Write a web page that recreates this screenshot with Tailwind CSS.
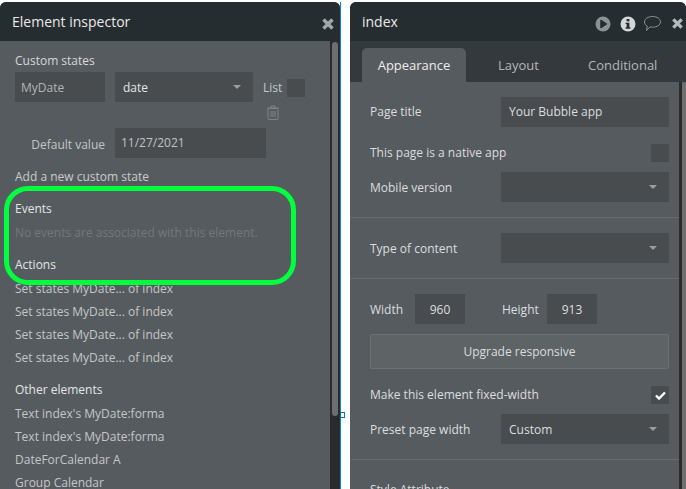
<!DOCTYPE html>
<html lang="en">
<head>
  <meta charset="UTF-8" />
  <title>Element inspector</title>
  <script src="https://cdn.jsdelivr.net/npm/@tailwindcss/browser@4"></script>
</head>
<body class="bg-white w-[686px] h-[489px] overflow-hidden relative font-['Open_Sans',sans-serif] text-[12px] leading-[16px] text-[#d6d8d9]">
  <div class="flex h-[489px] pt-[2px]">

    <!-- Element inspector -->
    <div class="w-[340px] shrink-0 flex flex-col bg-[#565b5f] rounded-t-[6px] overflow-hidden">
      <div class="h-[39px] shrink-0 bg-[#262d30] flex items-center justify-between pl-[12px] pr-[5px]">
        <span class="text-[14px] text-[#e8eaea]">Element inspector</span>
        <svg width="14" height="14" viewBox="0 0 14 14" class="mt-[4px]"><path d="M2.500 2.500l9 9M11.500 2.500l-9 9" stroke="#a0a6a9" stroke-width="3.600" /></svg>
      </div>
      <div class="flex flex-1 min-h-0">
        <div class="w-[330px] pl-[15px] flex flex-col [&>*]:shrink-0">
          <div class="mt-[12px] h-[16px]">Custom states</div>
          <div class="mt-[3px] flex">
            <div class="w-[90px] h-[30px] bg-[#484c4f] pl-[6px] pt-[8px] text-[#b2b5b7]">MyDate</div>
            <div class="ml-[10px] w-[138px] h-[30px] bg-[#484c4f] pl-[8px] flex items-center justify-between pr-[12px] text-[#e4e5e6]">
              <span class="mt-[2px]">date</span>
              <span class="w-0 h-0 border-x-[4px] border-t-[4px] border-x-transparent border-t-[#9a9ea0]"></span>
            </div>
            <div class="ml-[10px] h-[30px] flex items-center pt-[2px] text-[#c4c7c8]">List</div>
            <div class="ml-[5px] mt-[7px] w-[18px] h-[18px] bg-[#484c4f]"></div>
          </div>
          <svg width="14" height="15" viewBox="0 0 14 15" class="ml-[251px] mt-[3px]" fill="none" stroke="#7f8487"><path d="M1 3h12M5 2.500V1h4v1.500" /><rect x="2" y="3.500" width="10" height="11" rx="1" /><path d="M5 6v6M7 6v6M9 6v6" /></svg>
          <div class="mt-[8px] flex h-[30px]">
            <div class="w-[90px] text-right pt-[9px] text-[#c4c7c8]">Default value</div>
            <div class="ml-[10px] w-[151px] bg-[#484c4f] pl-[6px] pt-[7px] text-[#c0c3c4]">11/27/2021</div>
          </div>
          <div class="mt-[11px] h-[16px] text-[#c9cbcc]">Add a new custom state</div>
          <div class="mt-[16px] h-[16px] text-[#e4e5e6]">Events</div>
          <div class="mt-[8px] h-[16px] text-[#74787b]">No events are associated with this element.</div>
          <div class="mt-[16px] h-[16px] text-[#e4e5e6]">Actions</div>
          <div class="mt-[8px] h-[16px] text-[#c4c7c8]">Set states MyDate... of index</div>
          <div class="mt-[7px] h-[16px] text-[#c4c7c8]">Set states MyDate... of index</div>
          <div class="mt-[7px] h-[16px] text-[#c4c7c8]">Set states MyDate... of index</div>
          <div class="mt-[7px] h-[16px] text-[#c4c7c8]">Set states MyDate... of index</div>
          <div class="mt-[16px] h-[16px] text-[#e4e5e6]">Other elements</div>
          <div class="mt-[8px] h-[16px] text-[#c4c7c8]">Text index's MyDate:forma</div>
          <div class="mt-[7px] h-[16px] text-[#c4c7c8]">Text index's MyDate:forma</div>
          <div class="mt-[7px] h-[16px] text-[#c4c7c8]">DateForCalendar A</div>
          <div class="mt-[7px] h-[16px] text-[#c4c7c8]">Group Calendar</div>
        </div>
        <!-- scrollbar -->
        <div class="w-[10px] bg-[#2b2b2b] pl-[2px] pr-[2px] pt-[1px]">
          <div class="h-[374px] bg-[#6e6e6e] rounded-[3px]"></div>
        </div>
      </div>
    </div>

    <!-- blue guide line -->
    <div class="w-[1px] bg-[#0a84e8] shrink-0"></div>
    <div class="w-[9px] shrink-0"></div>

    <!-- index panel -->
    <div class="w-[336px] shrink-0 flex flex-col bg-[#565b5f] rounded-t-[6px] overflow-hidden">
      <div class="h-[39px] shrink-0 bg-[#262d30] flex items-center justify-between pl-[12px]">
        <span class="text-[14px] text-[#e8eaea]">index</span>
        <div class="flex items-center mt-[4px] mr-[2px]">
          <svg width="16" height="16" viewBox="0 0 16 16"><circle cx="8" cy="8" r="7.500" fill="#8b9294" /><path d="M5.800 4l6 4-6 4z" fill="#262d30" stroke="#262d30" stroke-linejoin="round" /></svg>
          <svg width="16" height="16" viewBox="0 0 16 16" class="ml-[9px]"><circle cx="8" cy="8" r="7.500" fill="#d4d7d8" /><rect x="6.600" y="3" width="2.800" height="2.400" fill="#262d30" /><path d="M5.600 6.700h3.800v4.600h1v1.400H5.600v-1.400h1V8.100h-1z" fill="#262d30" /></svg>
          <svg width="19" height="17" viewBox="0 0 19 17" class="ml-[7px]" fill="none" stroke="#8b9294"><path d="M9.500 1.500c4.600 0 8 2.400 8 5.400s-3.400 5.300-8 5.300c-.9 0-1.700-.1-2.500-.3L3.500 15.500l.8-4.300C2.500 10.200 1.500 8.700 1.500 6.900c0-3 3.400-5.400 8-5.400z" /></svg>
          <svg width="13" height="13" viewBox="0 0 14 14" class="ml-[9px]"><path d="M2.500 2.500l9 9M11.500 2.500l-9 9" stroke="#b4b8ba" stroke-width="3.600" /></svg>
        </div>
      </div>
      <div class="h-[41px] shrink-0 bg-[#33393c] flex items-end pl-[12px] text-[13px]">
        <div class="w-[104px] h-[34px] bg-[#565b5f] rounded-t-[5px] flex items-center justify-center text-[#eceded]">Appearance</div>
        <div class="ml-[32px] h-[34px] flex items-center text-[#b4b7b9]">Layout</div>
        <div class="ml-[49px] h-[34px] flex items-center text-[#b4b7b9]">Conditional</div>
      </div>
      <div class="flex flex-1 min-h-0">
        <div class="w-[329px] flex flex-col [&>*]:shrink-0">
          <div class="flex mt-[15px] pl-[20px] h-[30px] items-center">
            <span class="w-[131px] text-[#dcdedf]">Page title</span>
            <div class="w-[168px] h-[30px] bg-[#484c4f] pl-[8px] flex items-center text-[#dcdedf]">Your Bubble app</div>
          </div>
          <div class="flex mt-[17px] pl-[20px] h-[18px] items-center justify-between w-[319px]">
            <span class="text-[#dcdedf]">This page is a native app</span>
            <div class="w-[18px] h-[18px] bg-[#484c4f]"></div>
          </div>
          <div class="flex mt-[10px] pl-[20px] h-[30px] items-center">
            <span class="w-[131px] mt-[1px] text-[#dcdedf]">Mobile version</span>
            <div class="w-[168px] h-[30px] bg-[#484c4f] flex items-center justify-end pr-[12px]">
              <span class="w-0 h-0 border-x-[4px] border-t-[4px] border-x-transparent border-t-[#9a9ea0]"></span>
            </div>
          </div>
          <div class="h-[1px] bg-[#64696c] mt-[15px]"></div>
          <div class="flex mt-[15px] pl-[20px] h-[30px] items-center">
            <span class="w-[131px] mt-[1px] text-[#dcdedf]">Type of content</span>
            <div class="w-[168px] h-[30px] bg-[#484c4f] flex items-center justify-end pr-[12px]">
              <span class="w-0 h-0 border-x-[4px] border-t-[4px] border-x-transparent border-t-[#9a9ea0]"></span>
            </div>
          </div>
          <div class="h-[1px] bg-[#64696c] mt-[15px]"></div>
          <div class="flex mt-[15px] pl-[20px] h-[30px] items-center text-[#dcdedf]">
            <span class="w-[45px] mt-[1px]">Width</span>
            <div class="w-[50px] h-[30px] bg-[#484c4f] flex items-center justify-center pt-[1px]">960</div>
            <span class="ml-[37px] w-[45px] mt-[1px]">Height</span>
            <div class="w-[50px] h-[30px] bg-[#484c4f] flex items-center justify-center pt-[1px]">913</div>
          </div>
          <div class="ml-[20px] mt-[10px] w-[299px] h-[35px] bg-[#5e6366] border border-[#6c7073] rounded-[2px] flex items-center justify-center text-[#dcdedf]">Upgrade responsive</div>
          <div class="flex mt-[17px] pl-[20px] h-[18px] items-center justify-between w-[319px]">
            <span class="text-[#dcdedf]">Make this element fixed-width</span>
            <div class="w-[18px] h-[18px] bg-[#484c4f] flex items-center justify-center">
              <svg width="11" height="9" viewBox="0 0 11 9" fill="none" stroke="#fff" stroke-width="2.400"><path d="M1 4.500l3 3 6-6" /></svg>
            </div>
          </div>
          <div class="flex mt-[10px] pl-[20px] h-[30px] items-center">
            <span class="w-[131px] mt-[1px] text-[#dcdedf]">Preset page width</span>
            <div class="w-[168px] h-[30px] bg-[#484c4f] pl-[8px] pr-[12px] flex items-center justify-between text-[#dcdedf]">
              <span class="mt-[2px]">Custom</span>
              <span class="w-0 h-0 border-x-[4px] border-t-[4px] border-x-transparent border-t-[#9a9ea0]"></span>
            </div>
          </div>
          <div class="h-[1px] bg-[#64696c] mt-[15px]"></div>
          <div class="mt-[22px] pl-[20px] text-[#dcdedf]">Style Attribute</div>
        </div>
        <div class="w-[7px] flex">
          <div class="w-[3px] bg-[#2b2b2b]"></div>
          <div class="flex-1 bg-[#6e6e6e] rounded-t-[3px]"></div>
        </div>
      </div>
    </div>
  </div>

  <!-- green highlight drawn over the screenshot -->
  <div class="absolute left-[4px] top-[186px] w-[292px] h-[99px] border-[5px] border-[#00ff3c] rounded-[24px]"></div>
  <!-- guide handle -->
  <div class="absolute left-[340px] top-[412px] w-[5px] h-[6px] bg-white border border-[#0a6fd0]"></div>
</body>
</html>
